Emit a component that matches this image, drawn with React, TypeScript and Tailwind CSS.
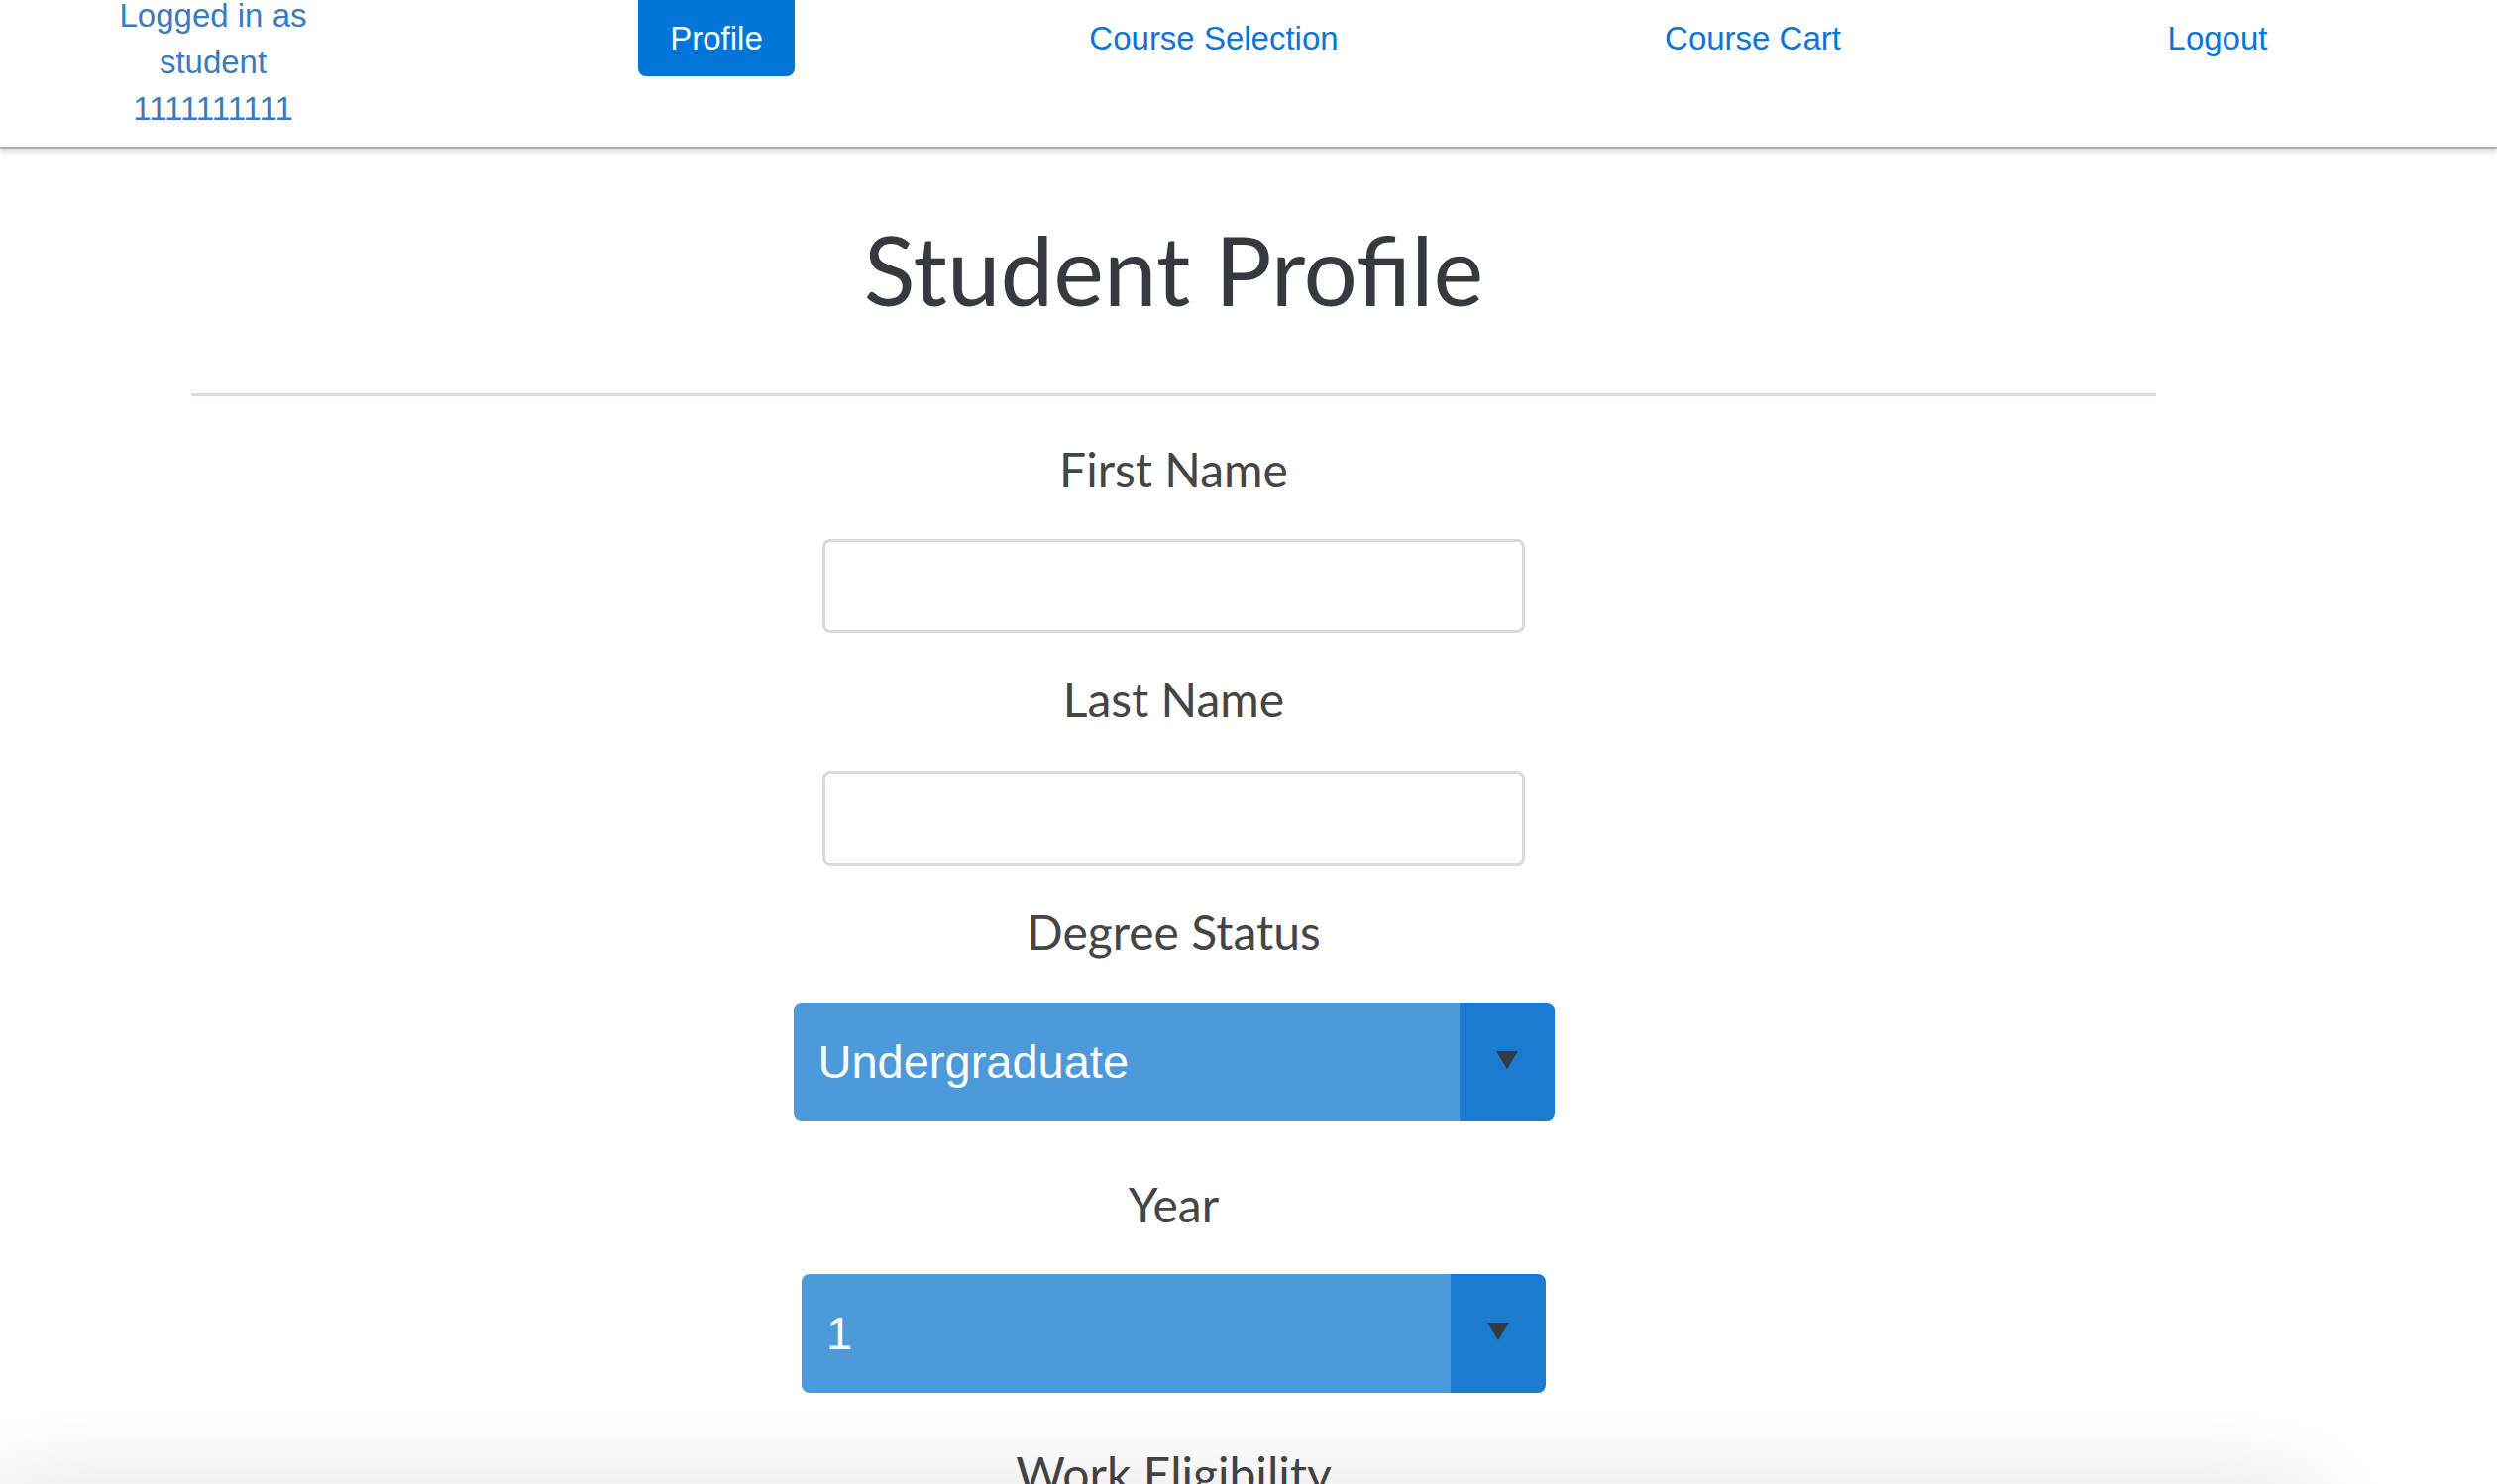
import React from 'react';

const navLinks = [
  { label: 'Course Selection' },
  { label: 'Course Cart' },
  { label: 'Logout' },
];

const Caret = () => (
  <svg width="22" height="18" viewBox="0 0 22 18">
    <polygon points="0,0 22,0 11,18" fill="#333a40" />
  </svg>
);

interface SelectBoxProps {
  value: string;
  width: string;
}

const SelectBox: React.FC<SelectBoxProps> = ({ value, width }) => (
  <div className={`flex h-[120px] ${width} rounded-[8px] overflow-hidden`}>
    <div className="flex-1 flex items-center bg-[#4d9ada] pl-[25px] text-white text-[47px] font-['Liberation_Sans',sans-serif]">
      {value}
    </div>
    <div className="w-[96px] flex items-center justify-center bg-[#1a7bd0] pb-[4px]">
      <Caret />
    </div>
  </div>
);

const Label: React.FC<{ children: React.ReactNode; className?: string }> = ({ children, className }) => (
  <div className={`text-[48px] leading-[72px] text-[#454545] font-['Lato',sans-serif] ${className ?? ''}`}>
    {children}
  </div>
);

export default function App() {
  return (
    <div className="relative w-[2520px] h-[1498px] overflow-hidden bg-white">
      <nav className="h-[150px] border-b-2 border-[#b0b0b0] shadow-[0_3px_5px_rgba(0,0,0,0.14)] grid grid-cols-[400px_616px_388px_700px_238px] pl-[15px] items-start font-['Liberation_Sans',sans-serif] text-[33px]">
        <div className="-mt-[8px] flex flex-col items-center leading-[47px] text-[#3a7bbd]">
          <span>Logged in as</span>
          <span>student</span>
          <span>1111111111</span>
        </div>
        <div className="flex justify-center">
          <button className="-mt-[8px] h-[85px] px-[32px] pt-[8px] rounded-[8px] bg-[#0275d8] text-white">
            Profile
          </button>
        </div>
        {navLinks.map((link) => (
          <div key={link.label} className="mt-[15px] flex justify-center leading-[47px] text-[#0a75d8]">
            {link.label}
          </div>
        ))}
      </nav>

      <main className="ml-[193px] w-[1983px] flex flex-col items-center">
        <h1 className="mt-[64px] text-[96px] leading-[115px] text-[#343a40] font-['Lato',sans-serif]">
          Student Profile
        </h1>
        <div className="mt-[68px] w-full h-[3px] bg-[#dcdcdc] shadow-[0_4px_8px_rgba(0,0,0,0.06)]" />

        <Label className="mt-[38px]">First Name</Label>
        <input className="mt-[34px] w-[709px] h-[95px] rounded-[8px] border-[3px] border-[#dadada] bg-white outline-none" />

        <Label className="mt-[31px]">Last Name</Label>
        <input className="mt-[36px] w-[709px] h-[96px] rounded-[8px] border-[3px] border-[#dadada] bg-white outline-none" />

        <Label className="mt-[31px]">Degree Status</Label>
        <div className="mt-[35px]">
          <SelectBox value="Undergraduate" width="w-[768px]" />
        </div>

        <Label className="mt-[48px]">Year</Label>
        <div className="mt-[34px]">
          <SelectBox value="1" width="w-[751px]" />
        </div>

        <Label className="mt-[46px]">Work Eligibility</Label>
      </main>

      <div className="absolute left-[20px] top-[1545px] w-[2280px] h-[200px] bg-[#e4e4e4] shadow-[0_0_110px_40px_rgba(0,0,0,0.12)]" />
    </div>
  );
}
